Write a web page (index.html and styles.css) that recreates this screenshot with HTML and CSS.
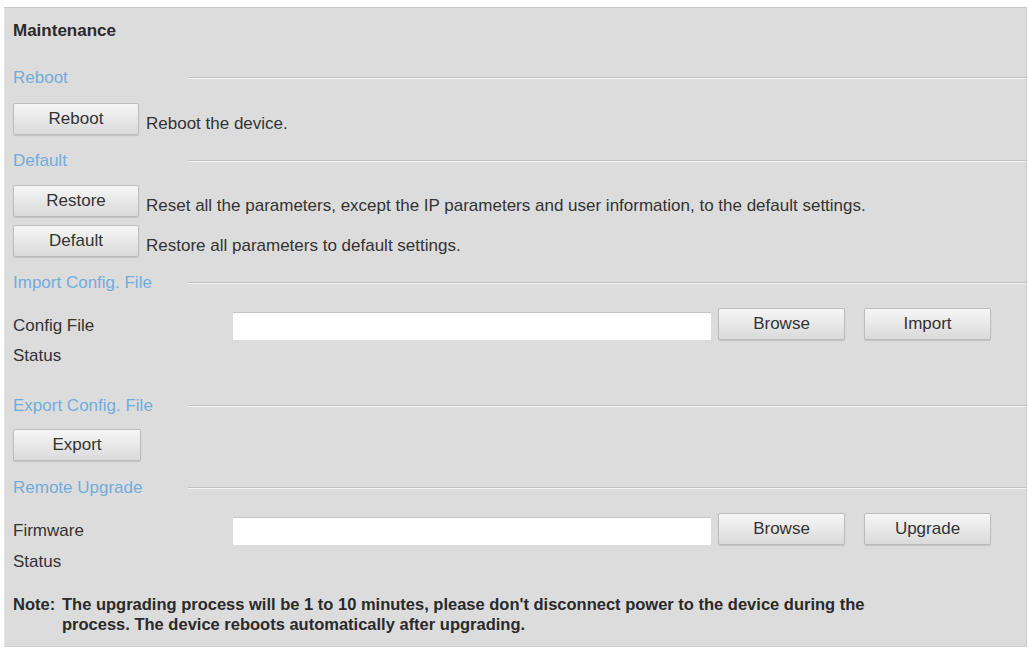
FILE: index.html
```html
<!DOCTYPE html>
<html lang="en">

<head>
    <meta charset="UTF-8">
    <title>Maintenance</title>
    <link rel="stylesheet" href="styles.css">
</head>

<body>
    <div class="panel">
        <h1 class="panel-title">Maintenance</h1>

        <div class="section-head head-reboot">
            <span class="section-name">Reboot</span>
            <span class="section-line"></span>
        </div>
        <div class="action-row row-reboot">
            <button class="btn">Reboot</button>
            <span class="action-desc">Reboot the device.</span>
        </div>

        <div class="section-head head-default">
            <span class="section-name">Default</span>
            <span class="section-line"></span>
        </div>
        <div class="action-row row-restore">
            <button class="btn">Restore</button>
            <span class="action-desc">Reset all the parameters, except the IP parameters and user information, to the default settings.</span>
        </div>
        <div class="action-row row-default">
            <button class="btn">Default</button>
            <span class="action-desc">Restore all parameters to default settings.</span>
        </div>

        <div class="section-head head-import">
            <span class="section-name">Import Config. File</span>
            <span class="section-line"></span>
        </div>
        <div class="file-row row-config">
            <label class="field-label">Config File</label>
            <input type="text" class="file-input">
            <button class="btn btn-wide btn-browse">Browse</button>
            <button class="btn btn-wide">Import</button>
        </div>
        <div class="status-row">Status</div>

        <div class="section-head head-export">
            <span class="section-name">Export Config. File</span>
            <span class="section-line"></span>
        </div>
        <div class="action-row row-export">
            <button class="btn btn-export">Export</button>
        </div>

        <div class="section-head head-upgrade">
            <span class="section-name">Remote Upgrade</span>
            <span class="section-line"></span>
        </div>
        <div class="file-row row-firmware">
            <label class="field-label">Firmware</label>
            <input type="text" class="file-input">
            <button class="btn btn-wide btn-browse">Browse</button>
            <button class="btn btn-wide">Upgrade</button>
        </div>
        <div class="status-row">Status</div>

        <div class="note">
            <span class="note-tag">Note:</span>
            <span class="note-text">The upgrading process will be 1 to 10 minutes, please don't disconnect power to the device during the process. The device reboots automatically after upgrading.</span>
        </div>
    </div>
</body>

</html>
```

FILE: styles.css
```css
body {
    margin: 0;
    background-color: #ffffff;
    font-family: "Liberation Sans", Arial, sans-serif;
    font-size: 17px;
    color: #333333;
}

.panel {
    margin: 7px 2px 0 4px;
    height: 640px;
    box-sizing: border-box;
    padding: 11px 0 0 8px;
    background-color: #dcdcdc;
    border-top: 1px solid #c8c8c8;
    border-left: 1px solid #e4e4e4;
    border-right: 1px solid #cccccc;
    border-bottom: 1px solid #d0d0d0;
    display: flex;
    flex-direction: column;
}

.panel-title {
    margin: 0;
    height: 24px;
    line-height: 24px;
    font-size: 17px;
    font-weight: bold;
    color: #2a2a2a;
}

/* section captions with the etched rule to the right */
.section-head {
    display: flex;
    align-items: center;
    height: 24px;
}

.section-name {
    width: 175px;
    flex: none;
    color: #72acdc;
    font-size: 17px;
}

.section-line {
    flex: 1;
    height: 0;
    border-top: 1px solid #c0c0c0;
    border-bottom: 1px solid #f4f4f4;
}

.head-reboot { margin-top: 23px; }
.head-default { margin-top: 14px; }
.head-import { margin-top: 14px; }
.head-export { margin-top: 26px; }
.head-upgrade { margin-top: 15px; }

.btn {
    width: 126px;
    height: 32px;
    padding: 0;
    font-family: inherit;
    font-size: 17px;
    color: #333333;
    background: linear-gradient(#f6f6f6, #dadada);
    border: 1px solid #bcbcbc;
    border-radius: 2px;
    box-shadow: 0 1px 1px rgba(0, 0, 0, 0.12);
}

.btn-wide {
    width: 127px;
}

.btn-export {
    width: 128px;
}

.action-row {
    display: flex;
    align-items: center;
    gap: 7px;
    height: 32px;
}

.action-desc {
    padding-top: 9px;
}

.row-reboot { margin-top: 13px; }
.row-restore { margin-top: 12px; }
.row-default { margin-top: 8px; }
.row-export { margin-top: 11px; }

.file-row {
    display: flex;
    align-items: center;
    height: 33px;
    margin-top: 12px;
}

.field-label {
    width: 220px;
    flex: none;
    padding-top: 4px;
}

.file-input {
    width: 478px;
    height: 28px;
    box-sizing: border-box;
    margin-top: 5px;
    border: none;
    border-top: 1px solid #c4c4c4;
    background-color: #ffffff;
}

.btn-browse {
    margin: 0 19px 0 7px;
}

.status-row {
    height: 24px;
    line-height: 24px;
    margin-top: 4px;
}

.row-firmware + .status-row {
    margin-top: 5px;
}

.note {
    display: flex;
    margin-top: 20px;
    font-weight: bold;
    line-height: 20px;
    font-size: 16.5px;
    color: #2a2a2a;
}

.note-tag {
    width: 49px;
    flex: none;
}

.note-text {
    width: 815px;
}
```
